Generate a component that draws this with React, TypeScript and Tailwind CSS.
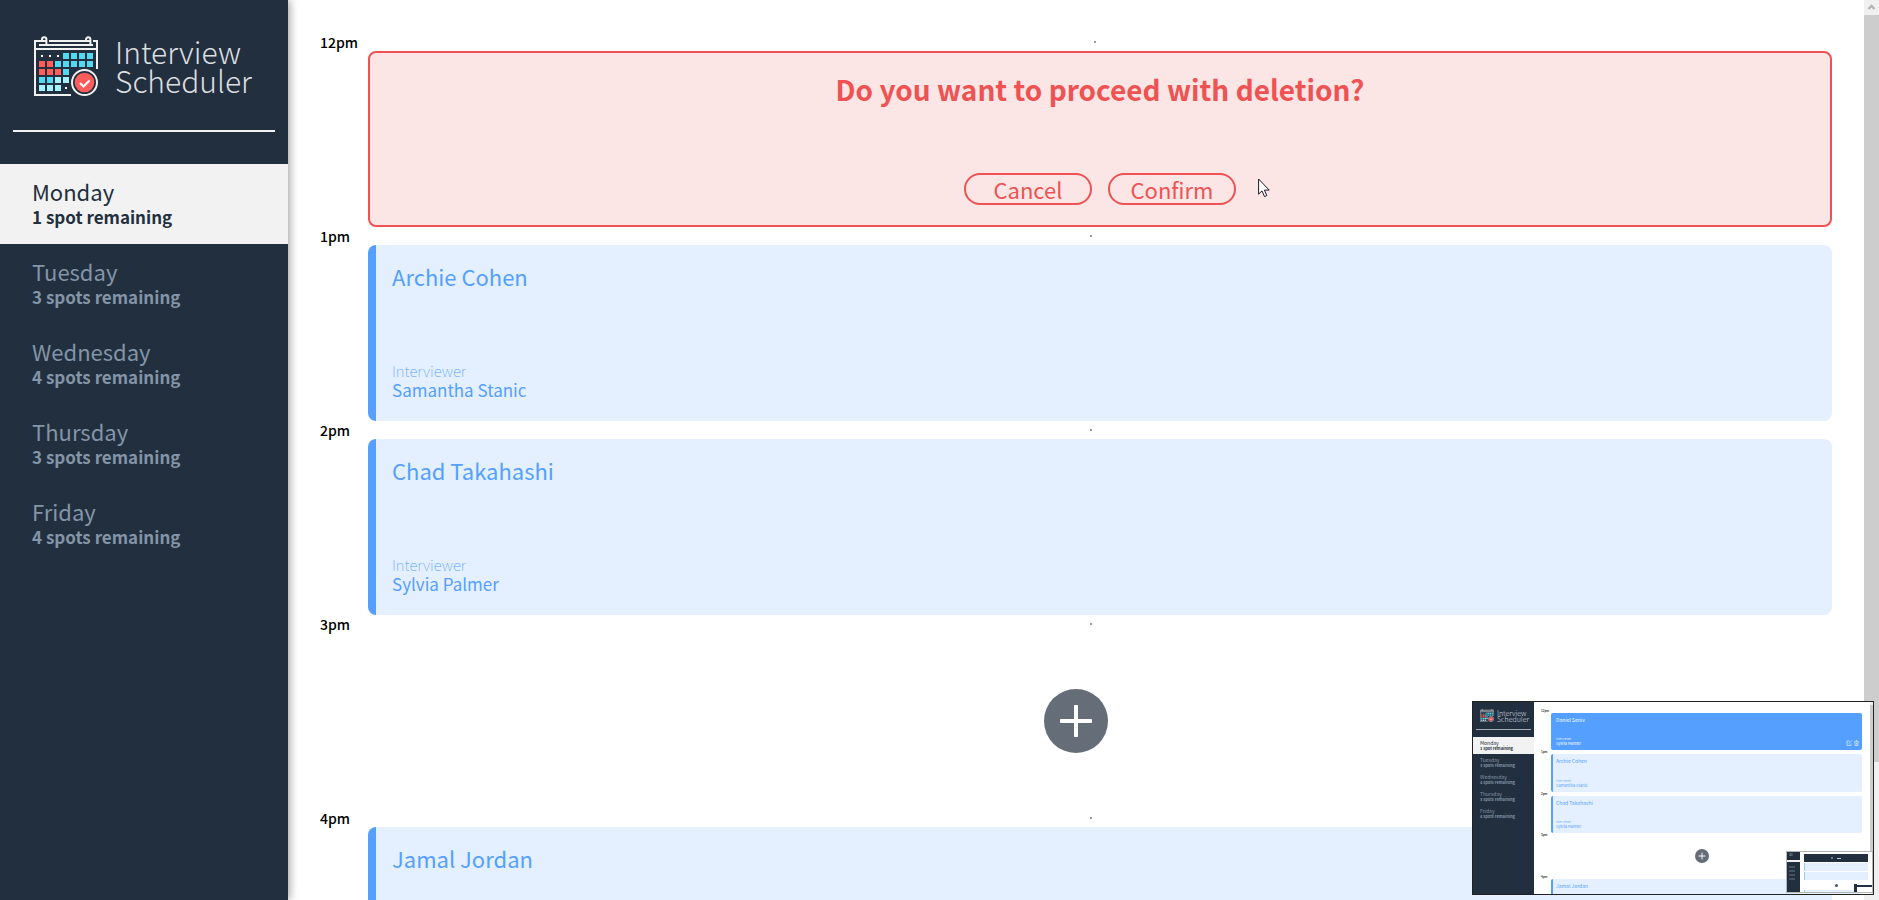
import React from "react";

type Booking = { time: string; student?: string; interviewer?: string };
type Day = { name: string; spots: string };

const days: Day[] = [
  { name: "Monday", spots: "1 spot remaining" },
  { name: "Tuesday", spots: "3 spots remaining" },
  { name: "Wednesday", spots: "4 spots remaining" },
  { name: "Thursday", spots: "3 spots remaining" },
  { name: "Friday", spots: "4 spots remaining" },
];

const bookings: Booking[] = [
  { time: "1pm", student: "Archie Cohen", interviewer: "Samantha Stanic" },
  { time: "2pm", student: "Chad Takahashi", interviewer: "Sylvia Palmer" },
  { time: "3pm" },
  { time: "4pm", student: "Jamal Jordan" },
];

const RED = "#ff5c5c";
const CYAN = "#54d8f0";
const PALE = "#a6f1fc";

const squares: [number, number, string][] = [
  [3, 0, CYAN], [4, 0, CYAN], [5, 0, CYAN], [6, 0, CYAN],
  [0, 1, RED], [1, 1, RED], [2, 1, CYAN], [3, 1, CYAN], [4, 1, CYAN], [5, 1, CYAN], [6, 1, CYAN],
  [0, 2, RED], [1, 2, RED], [2, 2, RED], [3, 2, CYAN],
  [0, 3, CYAN], [1, 3, CYAN], [2, 3, PALE], [3, 3, PALE],
  [0, 4, PALE], [1, 4, PALE], [2, 4, PALE],
];

const dots: [number, number][] = [[0, 0], [1, 0], [2, 0], [3, 4]];

function CalendarLogo({ className }: { className: string }) {
  return (
    <svg viewBox="0 0 64 60" className={className} fill="none" aria-hidden="true">
      <g stroke="#f2f2f2" strokeWidth="2">
        <path d="M12 5H1V59H37" />
        <path d="M15 5H56M59 5H63V33" />
        <path d="M5 9H59" />
        <path d="M1 13H63" />
        <path d="M8 5V3.5a2.2 2.2 0 0 1 4.4 0V9" />
        <path d="M52 5V3.5a2.2 2.2 0 0 1 4.4 0V9" />
      </g>
      {squares.map(([c, r, fill]) => (
        <rect key={`${c}-${r}`} x={5 + c * 8} y={17 + r * 8} width="6" height="6" fill={fill} />
      ))}
      {dots.map(([c, r]) => (
        <rect key={`${c}-${r}`} x={7 + c * 8} y={19 + r * 8} width="2" height="2" fill="#fff" />
      ))}
      <circle cx="50.5" cy="46.5" r="12.5" fill="#222f3e" stroke="#f2f2f2" strokeWidth="2" />
      <circle cx="50.5" cy="46.5" r="9.8" fill={RED} />
      <path d="M46 47l3.5 3.5 6-6" stroke="#fff" strokeWidth="2" />
    </svg>
  );
}

function Sidebar() {
  return (
    <aside className="relative z-10 w-72 shrink-0 bg-[#222f3e] shadow-[2px_0_8px_rgba(0,0,0,0.35)]">
      <div className="flex items-center gap-[17px] pt-9 pl-[34px]">
        <CalendarLogo className="h-[60px] w-16" />
        <h1 className="text-[30px] leading-[29px] font-light text-[#dcdee0]">
          Interview
          <br />
          Scheduler
        </h1>
      </div>
      <hr className="mx-[13px] mt-[34px] mb-8 h-0.5 border-0 bg-[#f2f2f2]" />
      <nav>
        {days.map((d, i) => (
          <a
            key={d.name}
            href={`#${d.name}`}
            className={
              i === 0
                ? "flex h-20 flex-col justify-center bg-[#f2f2f2] px-8 text-[#222f3e]"
                : "flex h-20 flex-col justify-center px-8 text-[#8395a7]"
            }
          >
            <span className="text-[22px] leading-[26px] font-normal">{d.name}</span>
            <span className="text-[17px] leading-[26px] font-bold">{d.spots}</span>
          </a>
        ))}
      </nav>
    </aside>
  );
}

function TimeRow({ time }: { time: string }) {
  return (
    <header className="flex items-center">
      <h4 className="text-[14px] leading-[18px] font-medium text-black">{time}</h4>
      <hr className="mx-auto h-0.5 w-0.5 border border-[#999]" />
    </header>
  );
}

function PlusIcon() {
  return (
    <svg viewBox="0 0 64 64" className="size-full" aria-hidden="true">
      <circle cx="32" cy="32" r="32" fill="#656d78" />
      <rect x="30" y="16" width="4" height="32" rx="0.8" fill="#fff" />
      <rect x="16" y="30" width="32" height="4" rx="0.8" fill="#fff" />
    </svg>
  );
}

function Slot({ time, student, interviewer }: Booking) {
  return (
    <article>
      <TimeRow time={time} />
      {student ? (
        <div className="ml-12 flex h-44 flex-col justify-between rounded-lg border-l-8 border-[#549fff] bg-[#e4f0ff] px-4 pt-[15px] pb-[21px] text-[#549fff]">
          <h2 className="text-[22px] leading-8 font-normal">{student}</h2>
          {interviewer && (
            <section>
              <h4 className="text-[15px] leading-[18px] font-thin">Interviewer</h4>
              <h3 className="text-[17px] leading-5 font-normal">{interviewer}</h3>
            </section>
          )}
        </div>
      ) : (
        <div className="flex h-44 items-center justify-center">
          <button type="button" aria-label="Add" className="size-16 rounded-full">
            <PlusIcon />
          </button>
        </div>
      )}
    </article>
  );
}

function ConfirmSlot() {
  const button =
    "h-8 w-32 rounded-full border-2 border-[#ee5253] text-[22px] leading-7 font-normal text-[#ee5253]";
  return (
    <article>
      <TimeRow time="12pm" />
      <div className="ml-12 flex h-44 flex-col items-center justify-between rounded-lg border-2 border-[#ee5253] bg-[#fbe6e5] pt-4 pb-5 text-[#ee5253]">
        <h1 className="text-[28px] leading-10 font-bold">Do you want to proceed with deletion?</h1>
        <div className="flex gap-4">
          <button type="button" className={button}>Cancel</button>
          <button type="button" className={button}>Confirm</button>
        </div>
      </div>
    </article>
  );
}

function Scrollbar() {
  return (
    <div className="flex w-[15px] shrink-0 flex-col bg-[#f0f0f0]" aria-hidden="true">
      <svg viewBox="0 0 15 15" className="size-[15px]" fill="none">
        <path d="M4.5 9L7.5 6l3 3" stroke="#b4b4b4" strokeWidth="2.4" />
      </svg>
      <div className="h-[83%] bg-[#cdcdcd]" />
    </div>
  );
}

function TinyPreview() {
  return (
    <div className="absolute right-0 bottom-px flex h-[42px] w-[87px] overflow-hidden border border-[#b5b5b5] bg-white">
      <div className="w-[13px] shrink-0 bg-[#222f3e] pt-px">
        <CalendarLogo className="ml-0.5 h-[3px] w-1" />
        <div className="mt-1 h-0.5 bg-[#f2f2f2]" />
        <div className="mt-1 ml-0.5 flex flex-col gap-0.5">
          <div className="h-0.5 w-1.5 bg-[#445262]" />
          <div className="h-0.5 w-1.5 bg-[#445262]" />
          <div className="h-0.5 w-1.5 bg-[#445262]" />
          <div className="h-0.5 w-1.5 bg-[#445262]" />
        </div>
      </div>
      <div className="flex grow flex-col gap-px pt-0.5 pr-1 pl-1">
        <div className="flex h-2 shrink-0 items-center justify-center gap-1 bg-[#222f3e]">
          <div className="size-0.5 rounded-full bg-[#8395a7]" />
          <div className="h-px w-1 bg-[#c5ccd3]" />
        </div>
        <div className="h-2 shrink-0 border-l border-[#9cc7ff] bg-[#e4f0ff]" />
        <div className="h-2 shrink-0 border-l border-[#9cc7ff] bg-[#e4f0ff]" />
        <div className="flex h-2 shrink-0 items-center justify-center">
          <div className="size-[3px] rounded-full bg-[#4a5563]" />
        </div>
        <div className="h-2 shrink-0 border-l border-[#9cc7ff] bg-[#e4f0ff]" />
      </div>
      <div className="absolute right-0 bottom-0 flex h-2 w-[18px] bg-white">
        <div className="w-[3px] bg-[#222f3e]" />
        <div className="mt-px h-0.5 grow bg-[#222f3e]" />
      </div>
    </div>
  );
}

function PreviewSlot({ time, student, interviewer, active }: Booking & { active?: boolean }) {
  return (
    <div className="flex min-h-0 flex-1 flex-col">
      <div className="text-[3px] leading-[4px] font-medium text-black">{time}</div>
      {student ? (
        <div
          className={
            active
              ? "ml-[10px] flex grow items-end justify-between rounded-xs border-l-2 border-[#549fff] bg-[#549fff] px-[3px] py-1 text-white"
              : "ml-[10px] flex grow items-end justify-between rounded-xs border-l-2 border-[#549fff] bg-[#e4f0ff] px-[3px] py-1 text-[#549fff]"
          }
        >
          <div className="flex h-full flex-col justify-between">
            <div className="text-[5px] leading-[6px]">{student}</div>
            {interviewer && (
              <div>
                <div className="text-[3px] leading-[4px] font-light">Interviewer</div>
                <div className="text-[4px] leading-[5px]">{interviewer}</div>
              </div>
            )}
          </div>
          {active && (
            <svg viewBox="0 0 13 6" className="h-1.5 w-[13px]" fill="none" stroke="#d5e7ff" strokeWidth="0.8" aria-hidden="true">
              <path d="M3.5 1H1v4.5h4V3.5M2.5 3.8L5.8.6M8.5 1.3h4M9 1.5v4h3v-4M10 .5h1M10.5 2.5v2" />
            </svg>
          )}
        </div>
      ) : (
        <div className="flex grow items-center justify-center">
          <div className="size-[14px]">
            <PlusIcon />
          </div>
        </div>
      )}
    </div>
  );
}

function Preview() {
  return (
    <div className="absolute right-[5px] bottom-[5px] z-20 flex h-[194px] w-[402px] overflow-hidden border border-[#222] bg-white">
      <div className="w-[61px] shrink-0 bg-[#222f3e]">
        <div className="flex items-center gap-[3px] pt-[7px] pl-[7px]">
          <CalendarLogo className="h-[13px] w-[14px]" />
          <div className="text-[7px] leading-[6px] font-light text-[#dcdee0]">
            Interview
            <br />
            Scheduler
          </div>
        </div>
        <div className="mx-[3px] mt-[7px] mb-[7px] h-px bg-[#a7adb3]" />
        {days.map((d, i) => (
          <div
            key={d.name}
            className={
              i === 0
                ? "flex h-[17px] flex-col justify-center bg-[#f2f2f2] pl-[7px] text-[#222f3e]"
                : "flex h-[17px] flex-col justify-center pl-[7px] text-[#8395a7]"
            }
          >
            <div className="text-[5px] leading-[6px]">{d.name}</div>
            <div className="text-[4px] leading-[5px] font-bold">{d.spots}</div>
          </div>
        ))}
      </div>
      <div className="min-w-0 grow pt-[7px] pr-2 pl-[7px]">
        <div className="flex h-[207px] flex-col">
          <PreviewSlot time="12pm" student="Daniel Seniv" interviewer="Sylvia Palmer" active />
          {bookings.map((b) => (
            <PreviewSlot key={b.time} {...b} />
          ))}
        </div>
      </div>
      <div className="w-[3px] shrink-0 bg-[#f0f0f0] pt-[3px]">
        <div className="h-[83%] bg-[#cdcdcd]" />
      </div>
      <TinyPreview />
    </div>
  );
}

function Cursor() {
  return (
    <svg viewBox="0 0 13 20" className="absolute top-[178px] left-[1258px] z-20 h-5 w-[13px]" aria-hidden="true">
      <path d="M.6 1v15.2l3.4-3.3 2.5 5.7 2.3-1-2.4-5.5h4.8z" fill="#fff" stroke="#1a1a2a" strokeWidth="1" />
    </svg>
  );
}

export default function App() {
  return (
    <div className="relative flex h-screen overflow-hidden bg-white font-['Noto_Sans_CJK_TC',sans-serif]">
      <Sidebar />
      <main className="min-w-0 grow overflow-hidden px-8 pt-[33px]">
        <ConfirmSlot />
        {bookings.map((b) => (
          <Slot key={b.time} {...b} />
        ))}
      </main>
      <Scrollbar />
      <Cursor />
      <Preview />
    </div>
  );
}
